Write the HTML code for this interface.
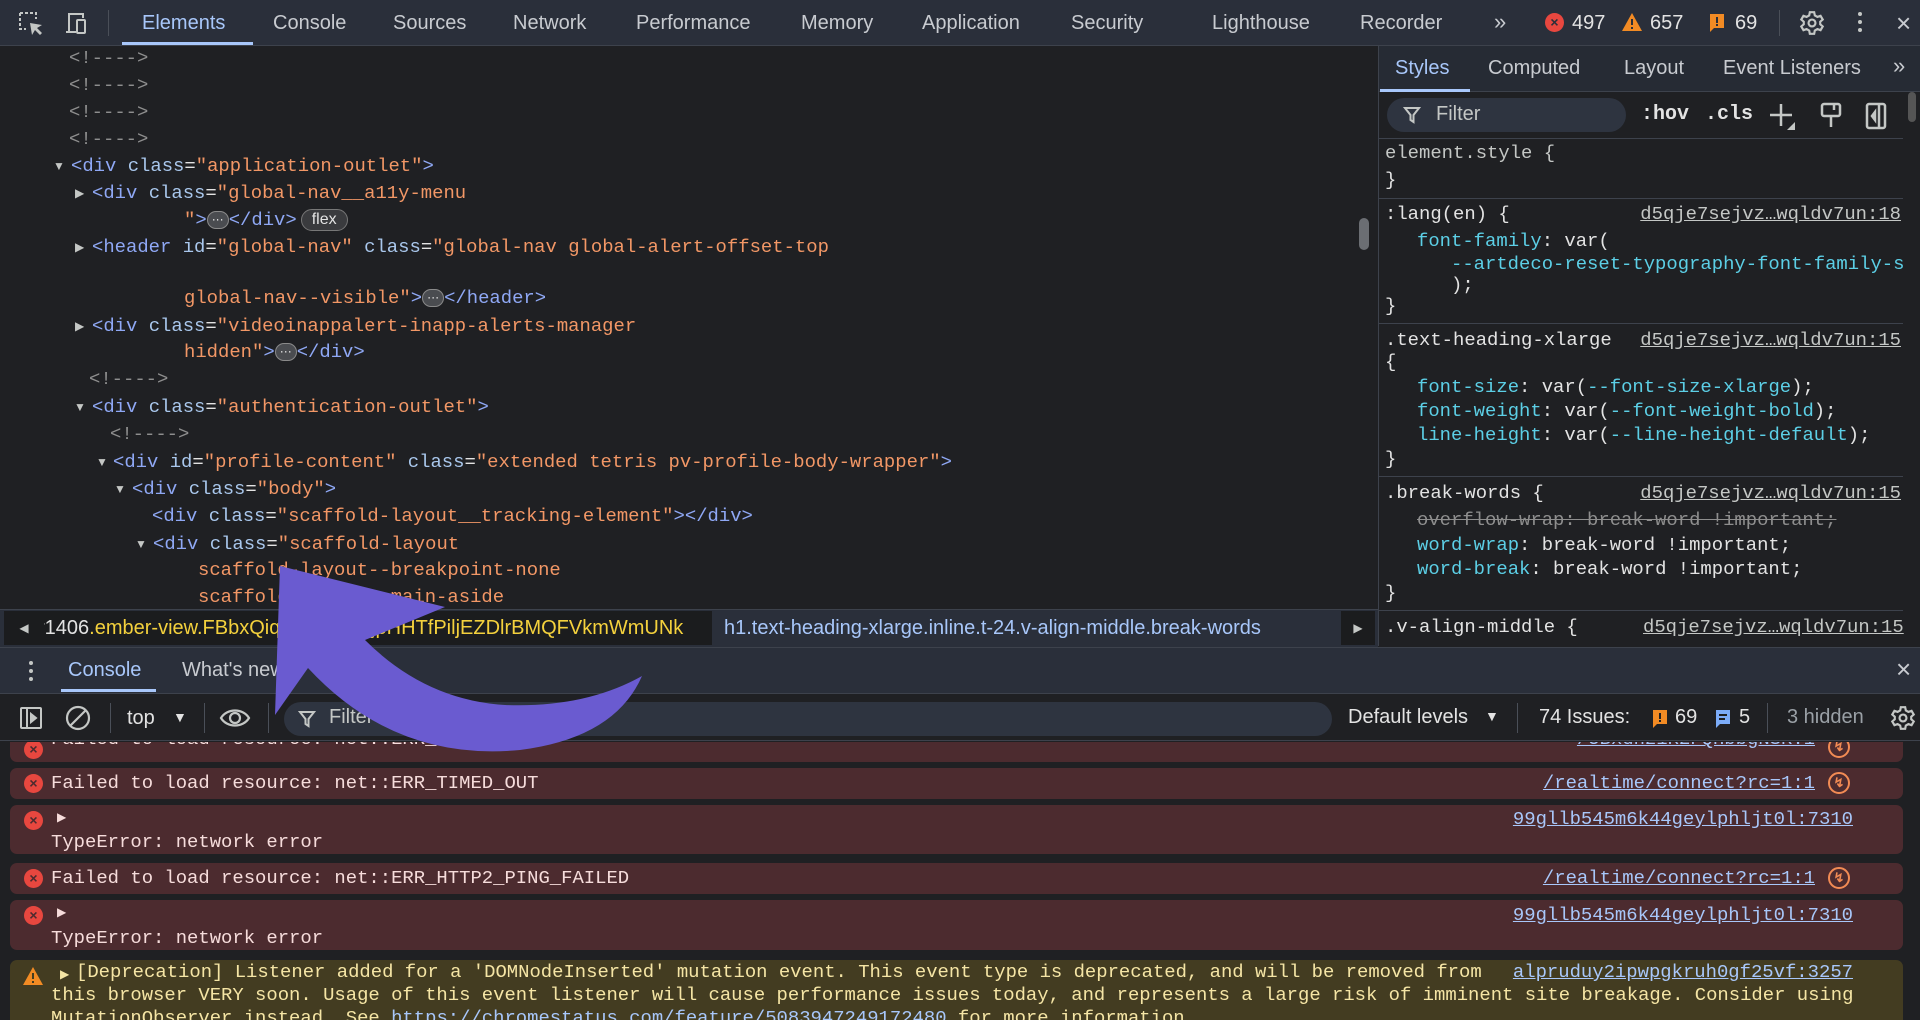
<!DOCTYPE html>
<html><head><meta charset="utf-8"><style>
*{margin:0;padding:0;box-sizing:border-box}
body{width:1920px;height:1020px;overflow:hidden;background:#1f2023;position:relative;font-family:"Liberation Sans",sans-serif;color:#e3e3e3}
.a{position:absolute;white-space:pre}
.m{font-family:"Liberation Mono",monospace;font-size:18.9px;line-height:27px}
.t{color:#8fa8f5}.n{color:#a9c7ec}.v{color:#f29766}.c{color:#8e8e8e}.w{color:#e3e3e3}
.tri{position:absolute;font-size:12px;color:#c4c7c5;line-height:27px}
.pill{display:inline-block;width:22px;height:18px;border-radius:9px;background:#4a4c50;border:1px solid #8a8a8a;color:#fff;font-size:12px;line-height:14px;text-align:center;vertical-align:middle;font-family:"Liberation Sans",sans-serif}
.flex{display:inline-block;padding:0 10px;height:22px;border-radius:11px;background:#3a3b3e;border:1px solid #777;color:#e3e3e3;font-size:16px;line-height:20px;vertical-align:middle;font-family:"Liberation Sans",sans-serif;margin-left:4px}
.tab{position:absolute;font-size:20px;color:#c8cbd0;top:12px}
.sty{font-family:"Liberation Mono",monospace;font-size:18.9px;line-height:24px;position:absolute;white-space:pre}
.p{color:#5ccfe6}.lk{color:#c4c7c5;text-decoration:underline}
.row{position:absolute;left:10px;width:1893px;background:#4c2b2f;border-radius:7px}
.et{color:#f6dcdb}
.ei{position:absolute;width:19px;height:19px;border-radius:50%;background:#e8473f;color:#4c2b2f;font-size:14px;line-height:19px;text-align:center;font-weight:bold}
.ul{color:#a8c7fa;text-decoration:underline}
.oi{position:absolute;width:22px;height:22px;border-radius:50%;border:2px solid #f28b54;color:#f28b54;font-size:13px;line-height:18px;text-align:center;font-weight:bold}
</style></head><body>

<!-- top bar -->
<div class="a" style="left:0;top:0;width:1920px;height:46px;background:#2a2f3a;border-bottom:1px solid #3d424c"></div>
<svg class="a" style="left:18px;top:11px" width="26" height="26" viewBox="0 0 26 26" fill="none" stroke="#c4c7c5" stroke-width="2"><path d="M2 2h16v6M2 2v16h6" stroke-dasharray="3 2"/><path d="M12 12l2 12 3-5 5 5 2-2-5-5 5-3z" fill="#c4c7c5" stroke="none"/></svg>
<svg class="a" style="left:64px;top:11px" width="26" height="26" viewBox="0 0 26 26" fill="none" stroke="#c4c7c5" stroke-width="2"><path d="M5 20V3h14v4"/><path d="M2 21h10"/><rect x="13" y="9" width="8" height="13" rx="1"/></svg>
<div class="a" style="left:108px;top:10px;width:1px;height:26px;background:#4a4f58"></div>
<div class="tab" style="left:142px;color:#a8c7fa">Elements</div>
<div class="a" style="left:122px;top:42px;width:131px;height:3px;background:#a8c7fa"></div>
<div class="tab" style="left:273px">Console</div>
<div class="tab" style="left:393px">Sources</div>
<div class="tab" style="left:513px">Network</div>
<div class="tab" style="left:636px">Performance</div>
<div class="tab" style="left:801px">Memory</div>
<div class="tab" style="left:922px">Application</div>
<div class="tab" style="left:1071px">Security</div>
<div class="tab" style="left:1212px">Lighthouse</div>
<div class="tab" style="left:1360px">Recorder</div>
<div class="tab" style="left:1494px;font-size:22px;top:9px">»</div>
<div class="ei" style="left:1545px;top:13px;color:#2a2f3a">×</div>
<div class="tab" style="left:1572px;color:#e3e3e3">497</div>
<svg class="a" style="left:1621px;top:12px" width="22" height="20"><path d="M11 1L21 19H1z" fill="#f28b24"/><rect x="10" y="7" width="2" height="6" fill="#2a2f3a"/><rect x="10" y="15" width="2" height="2" fill="#2a2f3a"/></svg>
<div class="tab" style="left:1650px;color:#e3e3e3">657</div>
<svg class="a" style="left:1708px;top:13px" width="18" height="20"><path d="M2 1h14v14H6l-4 4z" fill="#f28b24"/><rect x="8" y="4" width="2" height="6" fill="#2a2f3a"/><rect x="8" y="11" width="2" height="2" fill="#2a2f3a"/></svg>
<div class="tab" style="left:1735px;color:#e3e3e3">69</div>
<div class="a" style="left:1779px;top:10px;width:1px;height:26px;background:#4a4f58"></div>
<svg class="a" style="left:1799px;top:10px" width="26" height="26" viewBox="0 0 24 24" fill="none" stroke="#c4c7c5" stroke-width="2"><circle cx="12" cy="12" r="3.2"/><path d="M10 2h4l.6 3 2.4 1.4 2.9-1 2 3.4-2.3 2v2.4l2.3 2-2 3.4-2.9-1-2.4 1.4-.6 3h-4l-.6-3-2.4-1.4-2.9 1-2-3.4 2.3-2V10.8l-2.3-2 2-3.4 2.9 1L9.4 5z"/></svg>
<div class="a" style="left:1858px;top:12px;width:4px;height:4px;border-radius:2px;background:#c4c7c5;box-shadow:0 8px 0 #c4c7c5,0 16px 0 #c4c7c5"></div>
<div class="tab" style="left:1896px;top:8px;font-size:26px">×</div>

<!-- elements code -->
<div class="a" style="left:0;top:47px;width:1378px;height:562px;overflow:hidden">
<div class="a m c" style="left:69px;top:-2px">&lt;!----&gt;</div>
<div class="a m c" style="left:69px;top:25px">&lt;!----&gt;</div>
<div class="a m c" style="left:69px;top:52px">&lt;!----&gt;</div>
<div class="a m c" style="left:69px;top:79px">&lt;!----&gt;</div>
<div class="tri" style="left:53px;top:106px">▼</div>
<div class="a m" style="left:71px;top:106px"><span class="t">&lt;div</span> <span class="n">class</span><span class="w">=</span><span class="v">"application-outlet"</span><span class="t">&gt;</span></div>
<div class="tri" style="left:75px;top:133px">▶</div>
<div class="a m" style="left:92px;top:133px"><span class="t">&lt;div</span> <span class="n">class</span><span class="w">=</span><span class="v">"global-nav__a11y-menu</span></div>
<div class="a m" style="left:184px;top:160px"><span class="v">"</span><span class="t">&gt;</span><span class="pill">···</span><span class="t">&lt;/div&gt;</span><span class="flex">flex</span></div>
<div class="tri" style="left:75px;top:187px">▶</div>
<div class="a m" style="left:92px;top:187px"><span class="t">&lt;header</span> <span class="n">id</span><span class="w">=</span><span class="v">"global-nav"</span> <span class="n">class</span><span class="w">=</span><span class="v">"global-nav global-alert-offset-top</span></div>
<div class="a m" style="left:184px;top:238px"><span class="v">global-nav--visible"</span><span class="t">&gt;</span><span class="pill">···</span><span class="t">&lt;/header&gt;</span></div>
<div class="tri" style="left:75px;top:266px">▶</div>
<div class="a m" style="left:92px;top:266px"><span class="t">&lt;div</span> <span class="n">class</span><span class="w">=</span><span class="v">"videoinappalert-inapp-alerts-manager</span></div>
<div class="a m" style="left:184px;top:292px"><span class="v">hidden"</span><span class="t">&gt;</span><span class="pill">···</span><span class="t">&lt;/div&gt;</span></div>
<div class="a m c" style="left:89px;top:319px">&lt;!----&gt;</div>
<div class="tri" style="left:74px;top:347px">▼</div>
<div class="a m" style="left:92px;top:347px"><span class="t">&lt;div</span> <span class="n">class</span><span class="w">=</span><span class="v">"authentication-outlet"</span><span class="t">&gt;</span></div>
<div class="a m c" style="left:110px;top:374px">&lt;!----&gt;</div>
<div class="tri" style="left:96px;top:402px">▼</div>
<div class="a m" style="left:113px;top:402px"><span class="t">&lt;div</span> <span class="n">id</span><span class="w">=</span><span class="v">"profile-content"</span> <span class="n">class</span><span class="w">=</span><span class="v">"extended tetris pv-profile-body-wrapper"</span><span class="t">&gt;</span></div>
<div class="tri" style="left:114px;top:429px">▼</div>
<div class="a m" style="left:132px;top:429px"><span class="t">&lt;div</span> <span class="n">class</span><span class="w">=</span><span class="v">"body"</span><span class="t">&gt;</span></div>
<div class="a m" style="left:152px;top:456px"><span class="t">&lt;div</span> <span class="n">class</span><span class="w">=</span><span class="v">"scaffold-layout__tracking-element"</span><span class="t">&gt;&lt;/div&gt;</span></div>
<div class="tri" style="left:135px;top:484px">▼</div>
<div class="a m" style="left:153px;top:484px"><span class="t">&lt;div</span> <span class="n">class</span><span class="w">=</span><span class="v">"scaffold-layout</span></div>
<div class="a m v" style="left:198px;top:510px">scaffold-layout--breakpoint-none</div>
<div class="a m v" style="left:198px;top:537px">scaffold-layout--main-aside</div>
<div class="a" style="left:1359px;top:171px;width:10px;height:32px;border-radius:5px;background:#6b6e73"></div>
</div>

<!-- breadcrumb -->
<div class="a" style="left:0;top:609px;width:1378px;height:38px;background:#2a2f3a;border-top:1px solid #3d424c"></div>
<div class="a" style="left:4px;top:611px;width:40px;height:34px;background:#1b1c1e;color:#c4c7c5;font-size:12px;line-height:34px;text-align:center">◀</div>
<div class="a" style="left:44px;top:611px;width:668px;height:34px;background:#1b1c1e;overflow:hidden;font-size:20px;line-height:34px"><span style="color:#e3e3e3;margin-left:-6px">r1406</span><span style="color:#f4d13d">.ember-view.FBbxQiqlGebAYYkjpHHTfPiljEZDlrBMQFVkmWmUNk</span></div>
<div class="a" style="left:724px;top:611px;font-size:20px;line-height:34px;color:#a8c7fa">h1.text-heading-xlarge.inline.t-24.v-align-middle.break-words</div>
<div class="a" style="left:1341px;top:611px;width:34px;height:34px;background:#1b1c1e;color:#c4c7c5;font-size:12px;line-height:34px;text-align:center">▶</div>

<!-- styles pane -->
<div class="a" style="left:1378px;top:46px;width:542px;height:600px;background:#1f2023;border-left:1px solid #3d424c"></div>
<div class="a" style="left:1379px;top:46px;width:541px;height:46px;background:#262b34;border-bottom:1px solid #3d424c"></div>
<div class="tab" style="left:1395px;top:57px;color:#a8c7fa">Styles</div>
<div class="a" style="left:1380px;top:89px;width:90px;height:3px;background:#a8c7fa"></div>
<div class="tab" style="left:1488px;top:57px">Computed</div>
<div class="tab" style="left:1624px;top:57px">Layout</div>
<div class="tab" style="left:1723px;top:57px">Event Listeners</div>
<div class="tab" style="left:1893px;top:53px;font-size:22px">»</div>
<div class="a" style="left:1387px;top:98px;width:239px;height:34px;border-radius:17px;background:#2e3440"></div>
<svg class="a" style="left:1403px;top:106px" width="18" height="18" viewBox="0 0 18 18" fill="none" stroke="#c4c7c5" stroke-width="2"><path d="M2 2h14l-5.5 7v7l-3-2V9z"/></svg>
<div class="a" style="left:1436px;top:103px;font-size:20px;color:#c4c7c5">Filter</div>
<div class="a" style="left:1641px;top:103px;font-size:20px;font-weight:bold;font-family:'Liberation Mono',monospace;color:#e3e3e3">:hov</div>
<div class="a" style="left:1705px;top:103px;font-size:20px;font-weight:bold;font-family:'Liberation Mono',monospace;color:#e3e3e3">.cls</div>
<svg class="a" style="left:1769px;top:102px" width="28" height="30" fill="none" stroke="#c4c7c5" stroke-width="2.5"><path d="M12 2v22M1 13h22"/><path d="M26 20v8h-8z" fill="#c4c7c5" stroke="none"/></svg>
<svg class="a" style="left:1820px;top:102px" width="22" height="28" fill="none" stroke="#c4c7c5" stroke-width="2.5"><rect x="2" y="2" width="18" height="12" rx="2"/><path d="M11 14v11"/><path d="M14 2v6"/></svg>
<svg class="a" style="left:1865px;top:102px" width="22" height="28" fill="none" stroke="#c4c7c5" stroke-width="2.5"><rect x="2" y="2" width="18" height="24" rx="2"/><path d="M14 2v24"/><path d="M10 10l-3 4 3 4z" fill="#c4c7c5"/></svg>
<div class="a" style="left:1379px;top:138px;width:524px;height:1px;background:#3d424c"></div>
<div class="a" style="left:1379px;top:198px;width:524px;height:1px;background:#3d424c"></div>
<div class="a" style="left:1379px;top:323px;width:524px;height:1px;background:#3d424c"></div>
<div class="a" style="left:1379px;top:476px;width:524px;height:1px;background:#3d424c"></div>
<div class="a" style="left:1379px;top:610px;width:524px;height:1px;background:#3d424c"></div>
<div class="a" style="left:1908px;top:92px;width:8px;height:30px;border-radius:4px;background:#555"></div>
<div class="a" style="left:1379px;top:139px;width:524px;height:470px;overflow:hidden">
<div class="sty" style="left:6px;top:2px;color:#c4c7c5">element.style {</div>
<div class="sty" style="left:6px;top:29px">}</div>
<div class="sty" style="left:6px;top:63px">:lang(en) {</div>
<div class="sty lk" style="right:2px;top:63px">d5qje7sejvz…wqldv7un:18</div>
<div class="sty" style="left:38px;top:90px"><span class="p">font-family</span>: var(</div>
<div class="sty p" style="left:72px;top:113px">--artdeco-reset-typography-font-family-sans</div>
<div class="sty" style="left:72px;top:134px">);</div>
<div class="sty" style="left:6px;top:155px">}</div>
<div class="sty" style="left:6px;top:189px">.text-heading-xlarge</div>
<div class="sty lk" style="right:2px;top:189px">d5qje7sejvz…wqldv7un:15</div>
<div class="sty" style="left:6px;top:211px">{</div>
<div class="sty" style="left:38px;top:236px"><span class="p">font-size</span>: var(<span class="p">--font-size-xlarge</span>);</div>
<div class="sty" style="left:38px;top:260px"><span class="p">font-weight</span>: var(<span class="p">--font-weight-bold</span>);</div>
<div class="sty" style="left:38px;top:284px"><span class="p">line-height</span>: var(<span class="p">--line-height-default</span>);</div>
<div class="sty" style="left:6px;top:308px">}</div>
<div class="sty" style="left:6px;top:342px">.break-words {</div>
<div class="sty lk" style="right:2px;top:342px">d5qje7sejvz…wqldv7un:15</div>
<div class="sty" style="left:38px;top:369px;color:#8e8e8e;text-decoration:line-through">overflow-wrap: break-word !important;</div>
<div class="sty" style="left:38px;top:394px"><span class="p">word-wrap</span>: break-word !important;</div>
<div class="sty" style="left:38px;top:418px"><span class="p">word-break</span>: break-word !important;</div>
<div class="sty" style="left:6px;top:442px">}</div>
</div>
<div class="sty" style="left:1385px;top:615px">.v-align-middle {</div>
<div class="sty lk" style="left:1643px;top:615px">d5qje7sejvz…wqldv7un:15</div>

<!-- console drawer -->
<div class="a" style="left:0;top:647px;width:1920px;height:47px;background:#2a2f3a;border-top:1px solid #3d424c;border-bottom:1px solid #3d424c"></div>
<div class="a" style="left:29px;top:661px;width:4px;height:4px;border-radius:2px;background:#c4c7c5;box-shadow:0 8px 0 #c4c7c5,0 16px 0 #c4c7c5"></div>
<div class="tab" style="left:68px;top:659px;color:#a8c7fa">Console</div>
<div class="a" style="left:61px;top:689px;width:95px;height:3px;background:#a8c7fa"></div>
<div class="tab" style="left:182px;top:659px">What's new</div>
<div class="tab" style="left:1896px;top:654px;font-size:26px">×</div>
<div class="a" style="left:0;top:694px;width:1920px;height:47px;background:#1f2023;border-bottom:1px solid #3d424c"></div>
<svg class="a" style="left:19px;top:706px" width="24" height="24" fill="none" stroke="#c4c7c5" stroke-width="2"><rect x="2" y="2" width="20" height="20" rx="1"/><path d="M8 2v20"/><path d="M12 8l5 4-5 4z" fill="#c4c7c5"/></svg>
<svg class="a" style="left:65px;top:705px" width="26" height="26" fill="none" stroke="#c4c7c5" stroke-width="2.2"><circle cx="13" cy="13" r="11"/><path d="M5 21L21 5"/></svg>
<div class="a" style="left:110px;top:703px;width:1px;height:30px;background:#4a4f58"></div>
<div class="a" style="left:127px;top:707px;font-size:20px;color:#e3e3e3">top</div>
<div class="a" style="left:173px;top:709px;font-size:14px;color:#e3e3e3">▼</div>
<div class="a" style="left:204px;top:703px;width:1px;height:30px;background:#4a4f58"></div>
<svg class="a" style="left:219px;top:706px" width="32" height="24" fill="none" stroke="#c4c7c5" stroke-width="2.2"><path d="M2 12C8 2 24 2 30 12C24 22 8 22 2 12z"/><circle cx="16" cy="12" r="5"/></svg>
<div class="a" style="left:268px;top:703px;width:1px;height:30px;background:#4a4f58"></div>
<div class="a" style="left:284px;top:702px;width:1048px;height:34px;border-radius:17px;background:#2e3440"></div>
<svg class="a" style="left:298px;top:710px" width="18" height="18" viewBox="0 0 18 18" fill="none" stroke="#c4c7c5" stroke-width="2"><path d="M2 2h14l-5.5 7v7l-3-2V9z"/></svg>
<div class="a" style="left:329px;top:706px;font-size:20px;color:#c4c7c5">Filter</div>
<div class="a" style="left:1348px;top:706px;font-size:20px;color:#e3e3e3">Default levels</div>
<div class="a" style="left:1485px;top:708px;font-size:14px;color:#e3e3e3">▼</div>
<div class="a" style="left:1517px;top:703px;width:1px;height:30px;background:#4a4f58"></div>
<div class="a" style="left:1539px;top:706px;font-size:20px;color:#e3e3e3">74 Issues:</div>
<svg class="a" style="left:1651px;top:709px" width="18" height="20"><path d="M2 1h14v14H6l-4 4z" fill="#f28b24"/><rect x="8" y="4" width="2" height="6" fill="#1f2023"/><rect x="8" y="11" width="2" height="2" fill="#1f2023"/></svg>
<div class="a" style="left:1675px;top:706px;font-size:20px;color:#e3e3e3">69</div>
<svg class="a" style="left:1714px;top:709px" width="18" height="20"><path d="M2 1h14v14H6l-4 4z" fill="#7cacf8"/><rect x="5" y="5" width="8" height="2" fill="#1f2023"/><rect x="5" y="9" width="6" height="2" fill="#1f2023"/></svg>
<div class="a" style="left:1739px;top:706px;font-size:20px;color:#e3e3e3">5</div>
<div class="a" style="left:1767px;top:703px;width:1px;height:30px;background:#4a4f58"></div>
<div class="a" style="left:1787px;top:706px;font-size:20px;color:#9aa0a6">3 hidden</div>
<svg class="a" style="left:1890px;top:705px" width="26" height="26" viewBox="0 0 24 24" fill="none" stroke="#c4c7c5" stroke-width="2"><circle cx="12" cy="12" r="3.2"/><path d="M10 2h4l.6 3 2.4 1.4 2.9-1 2 3.4-2.3 2v2.4l2.3 2-2 3.4-2.9-1-2.4 1.4-.6 3h-4l-.6-3-2.4-1.4-2.9 1-2-3.4 2.3-2V10.8l-2.3-2 2-3.4 2.9 1L9.4 5z"/></svg>

<!-- console messages -->
<div class="a" style="left:0;top:742px;width:1920px;height:278px;overflow:hidden">
<div class="row" style="top:-20px;height:40px"></div>
<div class="ei" style="left:24px;top:-2px">×</div>
<div class="a m et" style="left:51px;top:-16px">Failed to load resource: net::ERR_TIMED_OUT</div>
<div class="a m ul" style="right:105px;top:-16px">/5Bxdhz1R2FQHbbgNSR:1</div>
<div class="oi" style="left:1828px;top:-6px">↯</div>

<div class="row" style="top:26px;height:31px"></div>
<div class="ei" style="left:24px;top:32px">×</div>
<div class="a m et" style="left:51px;top:28px">Failed to load resource: net::ERR_TIMED_OUT</div>
<div class="a m ul" style="right:105px;top:28px">/realtime/connect?rc=1:1</div>
<div class="oi" style="left:1828px;top:30px">↯</div>

<div class="row" style="top:63px;height:49px"></div>
<div class="ei" style="left:24px;top:69px">×</div>
<div class="a et" style="left:57px;top:68px;font-size:12px">▶</div>
<div class="a m et" style="left:51px;top:87px">TypeError: network error</div>
<div class="a m ul" style="right:67px;top:64px">99gllb545m6k44geylphljt0l:7310</div>

<div class="row" style="top:121px;height:31px"></div>
<div class="ei" style="left:24px;top:127px">×</div>
<div class="a m et" style="left:51px;top:123px">Failed to load resource: net::ERR_HTTP2_PING_FAILED</div>
<div class="a m ul" style="right:105px;top:123px">/realtime/connect?rc=1:1</div>
<div class="oi" style="left:1828px;top:125px">↯</div>

<div class="row" style="top:158px;height:50px"></div>
<div class="ei" style="left:24px;top:164px">×</div>
<div class="a et" style="left:57px;top:163px;font-size:12px">▶</div>
<div class="a m et" style="left:51px;top:183px">TypeError: network error</div>
<div class="a m ul" style="right:67px;top:160px">99gllb545m6k44geylphljt0l:7310</div>

<div class="row" style="top:218px;height:80px;background:#433c21"></div>
<svg class="a" style="left:22px;top:224px" width="22" height="20"><path d="M11 1L21 19H1z" fill="#f28b24"/><rect x="10" y="7" width="2" height="6" fill="#433c21"/><rect x="10" y="15" width="2" height="2" fill="#433c21"/></svg>
<div class="a" style="left:60px;top:225px;font-size:12px;color:#f5e5a5">▶</div>
<div class="a m" style="left:76px;top:219px;color:#f5e5a5;line-height:23px">[Deprecation] Listener added for a 'DOMNodeInserted' mutation event. This event type is deprecated, and will be removed from</div>
<div class="a m ul" style="right:67px;top:219px;line-height:23px">alpruduy2ipwpgkruh0gf25vf:3257</div>
<div class="a m" style="left:51px;top:242px;color:#f5e5a5;line-height:23px">this browser VERY soon. Usage of this event listener will cause performance issues today, and represents a large risk of imminent site breakage. Consider using</div>
<div class="a m" style="left:51px;top:265px;color:#f5e5a5;line-height:23px">MutationObserver instead. See <span class="ul">https://chromestatus.com/feature/5083947249172480</span> for more information.</div>
</div>

<!-- purple arrow overlay -->
<svg class="a" style="left:0;top:0" width="1920" height="1020">
<path d="M280,566 L445,607 L365,640 Q425,700 505,705 Q585,708 642,676 Q615,738 520,750 Q395,762 308,668 L275,715 Z" fill="#6a5bd0"/>
</svg>
</body></html>
